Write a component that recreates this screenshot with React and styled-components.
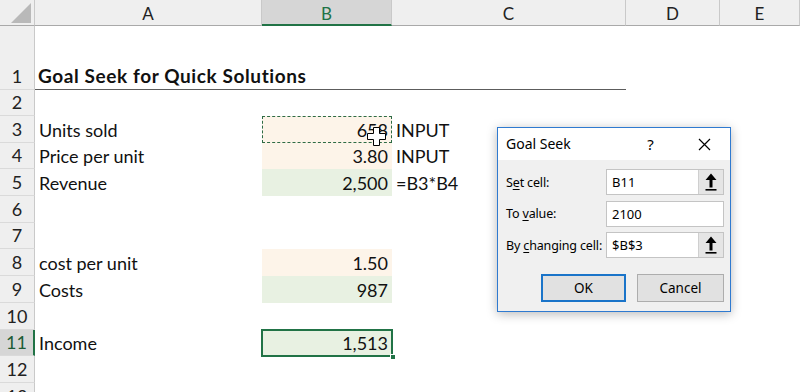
import React from 'react'
import styled, { createGlobalStyle, css } from 'styled-components'

const GlobalStyle = createGlobalStyle`
  *, *::before, *::after { box-sizing: border-box; }
  html, body { margin: 0; padding: 0; background: #fff; overflow: hidden; }
`

const Sheet = styled.div`
  position: relative;
  width: 800px;
  height: 392px;
  overflow: hidden;
  display: grid;
  grid-template-columns: 35px 227px 130px 234px 94px 80px;
  grid-template-rows: 26px 64px 26px repeat(11, 26.7px);
  font-family: Lato, 'Liberation Sans', sans-serif;
  font-size: 18px;
  color: #111;
`

const Corner = styled.div`
  background: #efefef;
  border-right: 1px solid #c9c9c9;
  border-bottom: 1px solid #a9a9a9;
  display: flex;
  align-items: flex-end;
  justify-content: flex-end;
  padding: 0 2px 1px 0;
`

const ColHead = styled.div`
  display: flex;
  align-items: center;
  justify-content: center;
  background: ${(p) => (p.$active ? '#d6d6d6' : '#efefef')};
  color: ${(p) => (p.$active ? '#217346' : '#222')};
  border-right: 1px solid #c9c9c9;
  border-bottom: ${(p) => (p.$active ? '2px solid #217346' : '1px solid #a9a9a9')};
  font-size: 17px;
  padding-top: ${(p) => (p.$active ? '2px' : '1px')};
`

const RowHead = styled.div`
  display: flex;
  align-items: flex-end;
  justify-content: center;
  line-height: 20px;
  padding-bottom: 3px;
  background: ${(p) => (p.$active ? '#d6d6d6' : '#efefef')};
  color: ${(p) => (p.$active ? '#1d5c37' : '#222')};
  border-right: ${(p) => (p.$active ? '2px solid #217346' : '1px solid #c9c9c9')};
  border-bottom: 1px solid #dadada;
  font-size: 18px;
`

const fills = {
  orange: '#fdf4e9',
  green: '#e8f1e2',
}

const Cell = styled.div`
  position: relative;
  display: flex;
  align-items: flex-end;
  justify-content: ${(p) => (p.$right ? 'flex-end' : 'flex-start')};
  padding: 0 4px 3px 4px;
  line-height: 20px;
  white-space: nowrap;
  background: ${(p) => fills[p.$fill] || 'transparent'};
  ${(p) =>
    p.$bold &&
    css`
      font-weight: 700;
      font-size: 19px;
      letter-spacing: 0.6px;
      padding-left: 3px;
    `}
  ${(p) =>
    p.$rule &&
    css`
      border-bottom: 1px solid #5c5c5c;
    `}
  ${(p) =>
    p.$dashed &&
    css`
      &::after {
        content: '';
        position: absolute;
        inset: 0;
        border: 1px dashed #2e6b44;
      }
    `}
  ${(p) =>
    p.$selected &&
    css`
      z-index: 2;
      &::after {
        content: '';
        position: absolute;
        inset: -1px;
        border: 2px solid #217346;
      }
      &::before {
        content: '';
        position: absolute;
        right: -4px;
        bottom: -4px;
        width: 6px;
        height: 6px;
        background: #217346;
        border: 1px solid #fff;
        z-index: 3;
      }
    `}
`

const Cursor = styled.svg`
  position: absolute;
  left: 105px;
  top: 11px;
  z-index: 4;
`

const Dialog = styled.div`
  position: absolute;
  left: 497px;
  top: 127px;
  width: 234px;
  height: 185px;
  border: 1px solid #2f7ad0;
  background: #f0f0f0;
  box-shadow: 0 2px 10px rgba(0, 0, 0, 0.28);
  font-family: 'Noto Sans', 'Open Sans', sans-serif;
  font-size: 12.5px;
  color: #000;
  z-index: 10;
  display: flex;
  flex-direction: column;
`

const TitleBar = styled.div`
  height: 32px;
  background: #fff;
  display: flex;
  align-items: center;
  padding: 0 0 0 8px;
`

const Title = styled.div`
  flex: 1;
  font-size: 14px;
  padding-bottom: 1px;
`

const TitleButton = styled.div`
  width: 55px;
  height: 32px;
  display: flex;
  align-items: center;
  justify-content: center;
  font-size: 15px;
  padding-left: ${(p) => p.$shift || 0}px;
`

const Body = styled.div`
  flex: 1;
  padding: 9px 6px 9px 7px;
  display: flex;
  flex-direction: column;
`

const Fields = styled.div`
  display: grid;
  grid-template-columns: 101px 118px;
  grid-auto-rows: 26px;
  row-gap: 5.5px;
  align-items: center;
`

const Label = styled.div`
  padding-left: 1px;
  white-space: nowrap;
  letter-spacing: -0.15px;
  u {
    text-decoration-thickness: 1px;
    text-underline-offset: 2px;
  }
`

const Input = styled.div`
  height: 26px;
  background: #fff;
  border: 1px solid #c4c4c4;
  display: flex;
  align-items: center;
  font-size: 13px;
`

const InputText = styled.div`
  flex: 1;
  padding-left: 5px;
`

const RefButton = styled.div`
  width: 25px;
  height: 24px;
  background: #e5e5e5;
  border-left: 1px solid #cfcfcf;
  display: flex;
  align-items: center;
  justify-content: center;
`

const Buttons = styled.div`
  margin-top: 16px;
  display: flex;
  justify-content: flex-end;
  gap: 11px;
`

const Button = styled.div`
  width: ${(p) => p.$w}px;
  height: 28px;
  display: flex;
  align-items: center;
  justify-content: center;
  background: #e1e1e1;
  border: ${(p) => (p.$primary ? '2px solid #1a74c9' : '1px solid #adadad')};
  font-size: 13.5px;
`

const UpArrow = () => (
  <svg width="12" height="18" viewBox="0 0 12 18">
    <polygon points="6,0.5 11.5,7 7.5,7 7.5,14.5 4.5,14.5 4.5,7 0.5,7" fill="#000" />
    <rect x="0.5" y="16" width="11" height="1.6" fill="#000" />
  </svg>
)

const CloseIcon = () => (
  <svg width="13" height="13" viewBox="0 0 13 13">
    <path d="M1 1 L12 12 M12 1 L1 12" stroke="#000" strokeWidth="1.2" fill="none" />
  </svg>
)

const CornerTriangle = () => (
  <svg width="22" height="22" viewBox="0 0 22 22">
    <polygon points="21,1 21,21 1,21" fill="#b9b9b9" />
  </svg>
)

const columns = ['A', 'B', 'C', 'D', 'E']

const rows = [
  { n: 1, a: 'Goal Seek for Quick Solutions', bold: true, rule: true },
  { n: 2 },
  { n: 3, a: 'Units sold', b: '658', fill: 'orange', c: 'INPUT', dashed: true, cursor: true },
  { n: 4, a: 'Price per unit', b: '3.80', fill: 'orange', c: 'INPUT' },
  { n: 5, a: 'Revenue', b: '2,500', fill: 'green', c: '=B3*B4' },
  { n: 6 },
  { n: 7 },
  { n: 8, a: 'cost per unit', b: '1.50', fill: 'orange' },
  { n: 9, a: 'Costs', b: '987', fill: 'green' },
  { n: 10 },
  { n: 11, a: 'Income', b: '1,513', fill: 'green', selected: true },
  { n: 12 },
  { n: 13 },
]

const App = () => (
  <>
    <GlobalStyle />
    <Sheet>
      <Corner>
        <CornerTriangle />
      </Corner>
      {columns.map((c) => (
        <ColHead key={c} $active={c === 'B'}>
          {c}
        </ColHead>
      ))}
      {rows.map((r) => (
        <React.Fragment key={r.n}>
          <RowHead $active={r.selected}>{r.n}</RowHead>
          <Cell $bold={r.bold} $rule={r.rule}>
            {r.a}
          </Cell>
          <Cell $right $fill={r.fill} $rule={r.rule} $dashed={r.dashed} $selected={r.selected}>
            {r.b}
            {r.cursor && (
              <Cursor width="19" height="19" viewBox="0 0 19 19">
                <polygon
                  points="6.5,0.5 12.5,0.5 12.5,6.5 18.5,6.5 18.5,12.5 12.5,12.5 12.5,18.5 6.5,18.5 6.5,12.5 0.5,12.5 0.5,6.5 6.5,6.5"
                  fill="#fff"
                  stroke="#000"
                  strokeWidth="1"
                />
              </Cursor>
            )}
          </Cell>
          <Cell $rule={r.rule}>{r.c}</Cell>
          <Cell />
          <Cell />
        </React.Fragment>
      ))}
      <Dialog>
        <TitleBar>
          <Title>Goal Seek</Title>
          <TitleButton $shift={6}>?</TitleButton>
          <TitleButton $shift={4}>
            <CloseIcon />
          </TitleButton>
        </TitleBar>
        <Body>
          <Fields>
            <Label>
              S<u>e</u>t cell:
            </Label>
            <Input>
              <InputText>B11</InputText>
              <RefButton>
                <UpArrow />
              </RefButton>
            </Input>
            <Label>
              To <u>v</u>alue:
            </Label>
            <Input>
              <InputText>2100</InputText>
            </Input>
            <Label>
              By <u>c</u>hanging cell:
            </Label>
            <Input>
              <InputText>$B$3</InputText>
              <RefButton>
                <UpArrow />
              </RefButton>
            </Input>
          </Fields>
          <Buttons>
            <Button $primary $w={85}>
              OK
            </Button>
            <Button $w={87}>Cancel</Button>
          </Buttons>
        </Body>
      </Dialog>
    </Sheet>
  </>
)

export default App
